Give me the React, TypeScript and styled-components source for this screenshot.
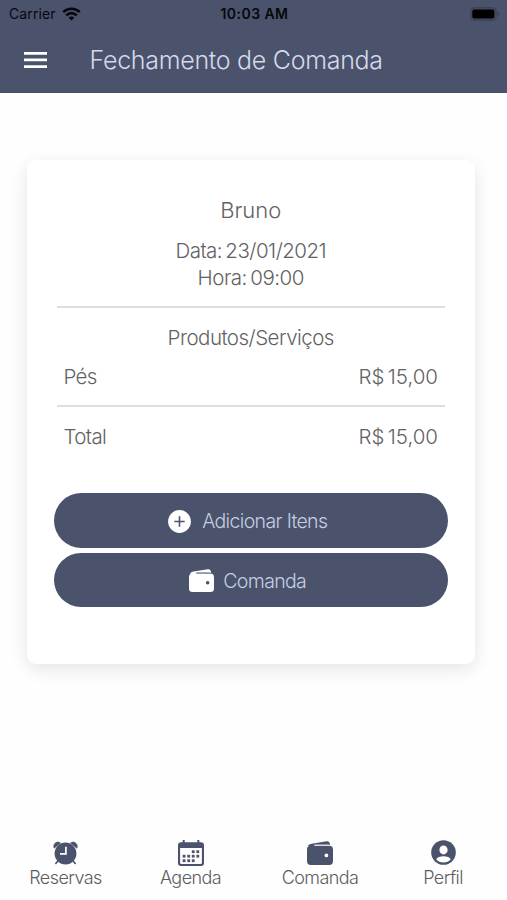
import React from "react";
import styled, { createGlobalStyle } from "styled-components";

const INK = "#4b526b";

const GlobalStyle = createGlobalStyle`
  * { box-sizing: border-box; }
  html, body { margin: 0; background: #fefefe; }
  body { font-family: Inter, Roboto, sans-serif; font-weight: 300; overflow: hidden; }
`;

const Screen = styled.div`
  display: flex;
  flex-direction: column;
  width: 507px;
  height: 900px;
  color: #626264;
  background: #fefefe;
`;

const Header = styled.header`
  height: 93.4px;
  background: ${INK};
`;

const StatusBar = styled.div`
  display: grid;
  grid-template-columns: 1fr auto 1fr;
  align-items: center;
  height: 27px;
  padding: 0 7px 0 9px;
  color: #07080c;
  font-size: 14px;
  font-weight: 400;
`;

const Carrier = styled.div`
  display: flex;
  align-items: center;
  gap: 6px;
  letter-spacing: 0.12px;
`;

const Clock = styled.div`
  font-weight: 600;
  letter-spacing: 0.45px;
`;

const Battery = styled.div`
  display: flex;
  justify-content: flex-end;
`;

const TitleBar = styled.div`
  display: flex;
  align-items: center;
  height: 66px;
  padding-left: 24px;
  gap: 42.5px;
`;

const Title = styled.h1`
  margin: 0;
  color: #d3daea;
  font-size: 25px;
  font-weight: 300;
  line-height: 30px;
  white-space: nowrap;
  letter-spacing: -0.29px;
`;

const Card = styled.main`
  display: flex;
  flex-direction: column;
  width: 448px;
  height: 504px;
  margin: 66.6px 0 0 27px;
  padding: 36px 27px 0 26.5px;
  border-radius: 9px;
  background: #fff;
  box-shadow: 0 5px 18px rgba(0, 0, 0, 0.1);
`;

const Line = styled.div<{ $spacing: number }>`
  font-size: 20.5px;
  line-height: 27px;
  letter-spacing: ${(p) => p.$spacing}px;
  word-spacing: -2px;
  text-align: center;
  white-space: nowrap;
`;

const Name = styled.h2`
  margin: 0 0 13px;
  font-size: 22px;
  font-weight: 300;
  line-height: 28px;
  text-align: center;
`;

const Section = styled.section<{ $height: number; $top?: number }>`
  height: ${(p) => p.$height}px;
  margin: 0 3.5px;
  padding-top: ${(p) => p.$top ?? 0}px;
  border-bottom: 2px solid #dedede;
`;

const Row = styled.div<{ $top: number }>`
  display: flex;
  justify-content: space-between;
  margin-top: ${(p) => p.$top}px;
  padding: 0 6.5px;
  font-size: 20.5px;
  line-height: 26px;
  letter-spacing: -0.65px;
`;

const Price = styled.span`
  letter-spacing: 0;
  word-spacing: -2.5px;
`;

const Totals = styled.section`
  height: 86.3px;
  margin: 0 3.5px;
`;

const Actions = styled.div`
  display: flex;
  flex-direction: column;
  gap: 5px;
`;

const Button = styled.button<{ $gap: number }>`
  display: flex;
  align-items: center;
  justify-content: center;
  gap: ${(p) => p.$gap}px;
  height: 54.6px;
  padding: 1px 6px 0 0;
  border: 0;
  border-radius: 28px;
  background: ${INK};
  color: #c5cee0;
  font: 300 19.5px Inter, Roboto, sans-serif;
  letter-spacing: -0.65px;
`;

const TabBar = styled.nav`
  display: grid;
  grid-template-columns: 131px 119px 140px 106px;
  margin-top: auto;
  height: 61.5px;
`;

const Tab = styled.a`
  display: flex;
  flex-direction: column;
  align-items: center;
  color: #5c5d61;
  font-size: 18px;
  line-height: 22px;
  letter-spacing: -0.58px;
`;

const IconBox = styled.span`
  display: flex;
  align-items: center;
  justify-content: center;
  height: 28px;
`;

const Wifi = () => (
  <svg width="19" height="14" viewBox="0 0 19 14" fill="none" stroke="#07080c" strokeWidth="2.6">
    <path d="M1.3 5.1C5.9.6 13.1.6 17.7 5.1M4.3 8.3c2.9-2.9 7.5-2.9 10.4 0" />
    <path d="M9.5 13.5 6.6 10.6c1.6-1.5 4.2-1.5 5.8 0Z" fill="#07080c" stroke="none" />
  </svg>
);

const BatteryIcon = () => (
  <svg width="30" height="14" viewBox="0 0 30 14">
    <rect x="0.7" y="0.7" width="25.5" height="12.6" rx="3.6" fill="#444a60" stroke="#3c4154" />
    <rect x="2.3" y="2.4" width="22" height="9.2" rx="2" fill="#000" />
    <path d="M27.7 4.8q2.8 2.2 0 4.4Z" fill="#35394a" />
  </svg>
);

const Menu = () => (
  <svg width="23" height="16" viewBox="0 0 23 16" fill="#fff">
    <path d="M0 0h23v2.7H0zM0 6.6h23v2.7H0zM0 13.2h23v2.7H0z" />
  </svg>
);

const AddIcon = () => (
  <svg width="23" height="23" viewBox="0 0 23 23">
    <circle cx="11.5" cy="11.5" r="11.4" fill="#fff" />
    <path d="M11.5 6.3v10.4M6.3 11.5h10.4" stroke={INK} strokeWidth="1.6" />
  </svg>
);

const Wallet = ({ width = 26, fill = INK, hole = "#fff" }: { width?: number; fill?: string; hole?: string }) => (
  <svg width={width} height={(width * 24) / 26} viewBox="0 0 26 24" fill={fill}>
    <path d="M3.7 4.8h18.6A3.7 3.7 0 0 1 26 8.5v11.7a3.7 3.7 0 0 1-3.7 3.7H3.7A3.7 3.7 0 0 1 0 20.2V8.5a3.7 3.7 0 0 1 3.7-3.7Z" />
    <path d="M1.3 4.3C2.1 3.4 3.3 2.9 4.7 2.7L19.6.2c1.9-.3 2.9.6 3.2 2.5l.2 1.4q-.8-.3-2-.3H7.5v.7h14v.7H1.3Z" />
    <path d="M7.5 3.8h14.8v.9H7.5Z" fill={hole} />
    <circle cx="19.4" cy="14.4" r="1.85" fill={hole} />
  </svg>
);

const Alarm = () => (
  <svg width="25" height="24" viewBox="0 0 25 24">
    <path d="M1.2 7.2C-.8 3.6 3.7-.9 7.5 1.9ZM17.5 1.9C21.3-.9 25.8 3.6 23.8 7.2Z" fill={INK} stroke={INK} strokeWidth="0.6" />
    <path d="m5.2 19.6-2.4 2.9m17-2.9 2.4 2.9" stroke={INK} strokeWidth="1.6" strokeLinecap="round" />
    <circle cx="12.5" cy="12.5" r="10.9" fill={INK} />
    <path d="M12.9 5.8v7.1H7" fill="none" stroke="#fff" strokeWidth="1.7" />
  </svg>
);

const DOTS = [
  [13.8, 10.3], [18.4, 10.3],
  [4.7, 14.8], [9.3, 14.8], [13.8, 14.8], [18.4, 14.8],
  [4.7, 19.3], [9.3, 19.3], [13.8, 19.3],
];

const Calendar = () => (
  <svg width="26" height="26" viewBox="0 0 26 26" fill={INK}>
    <path d="M4.7 0h2v2.2h12.6V0h2v2.2H23a3 3 0 0 1 3 3V23a3 3 0 0 1-3 3H3a3 3 0 0 1-3-3V5.2a3 3 0 0 1 3-3h1.7Z" />
    <path d="M2.1 8h21.8v14.7q0 1.2-1.2 1.2H3.3q-1.2 0-1.2-1.2Z" fill="#fff" />
    {DOTS.map(([x, y]) => (
      <rect key={`${x}-${y}`} x={x} y={y} width="2.8" height="2.8" />
    ))}
  </svg>
);

const Profile = () => (
  <svg width="25" height="25" viewBox="0 0 25 25">
    <circle cx="12.5" cy="12.5" r="12.3" fill={INK} />
    <ellipse cx="12.5" cy="9.9" rx="4.1" ry="4.5" fill="#fff" />
    <path d="M5.2 19.3c1.7-4 12.9-4 14.6 0-3.6 4.3-11 4.3-14.6 0Z" fill="#fff" />
  </svg>
);

export default function App() {
  return (
    <>
      <GlobalStyle />
      <Screen>
        <Header>
          <StatusBar>
            <Carrier>Carrier <Wifi /></Carrier>
            <Clock>10:03 AM</Clock>
            <Battery><BatteryIcon /></Battery>
          </StatusBar>
          <TitleBar>
            <Menu />
            <Title>Fechamento de Comanda</Title>
          </TitleBar>
        </Header>
        <Card>
          <Section $height={112}>
            <Name>Bruno</Name>
            <Line $spacing={-0.52}>Data: 23/01/2021</Line>
            <Line $spacing={-0.48}>Hora: 09:00</Line>
          </Section>
          <Section $height={99} $top={16}>
            <Line $spacing={-0.52}>Produtos/Serviços</Line>
            <Row $top={12.6}>
              <span>Pés</span>
              <Price>R$ 15,00</Price>
            </Row>
          </Section>
          <Totals>
            <Row $top={17}>
              <span>Total</span>
              <Price>R$ 15,00</Price>
            </Row>
          </Totals>
          <Actions>
            <Button $gap={11}><AddIcon />Adicionar Itens</Button>
            <Button $gap={9}><Wallet width={25} fill="#fff" hole={INK} />Comanda</Button>
          </Actions>
        </Card>
        <TabBar>
          <Tab><IconBox><Alarm /></IconBox>Reservas</Tab>
          <Tab><IconBox><Calendar /></IconBox>Agenda</Tab>
          <Tab><IconBox><Wallet /></IconBox>Comanda</Tab>
          <Tab><IconBox><Profile /></IconBox>Perfil</Tab>
        </TabBar>
      </Screen>
    </>
  );
}
